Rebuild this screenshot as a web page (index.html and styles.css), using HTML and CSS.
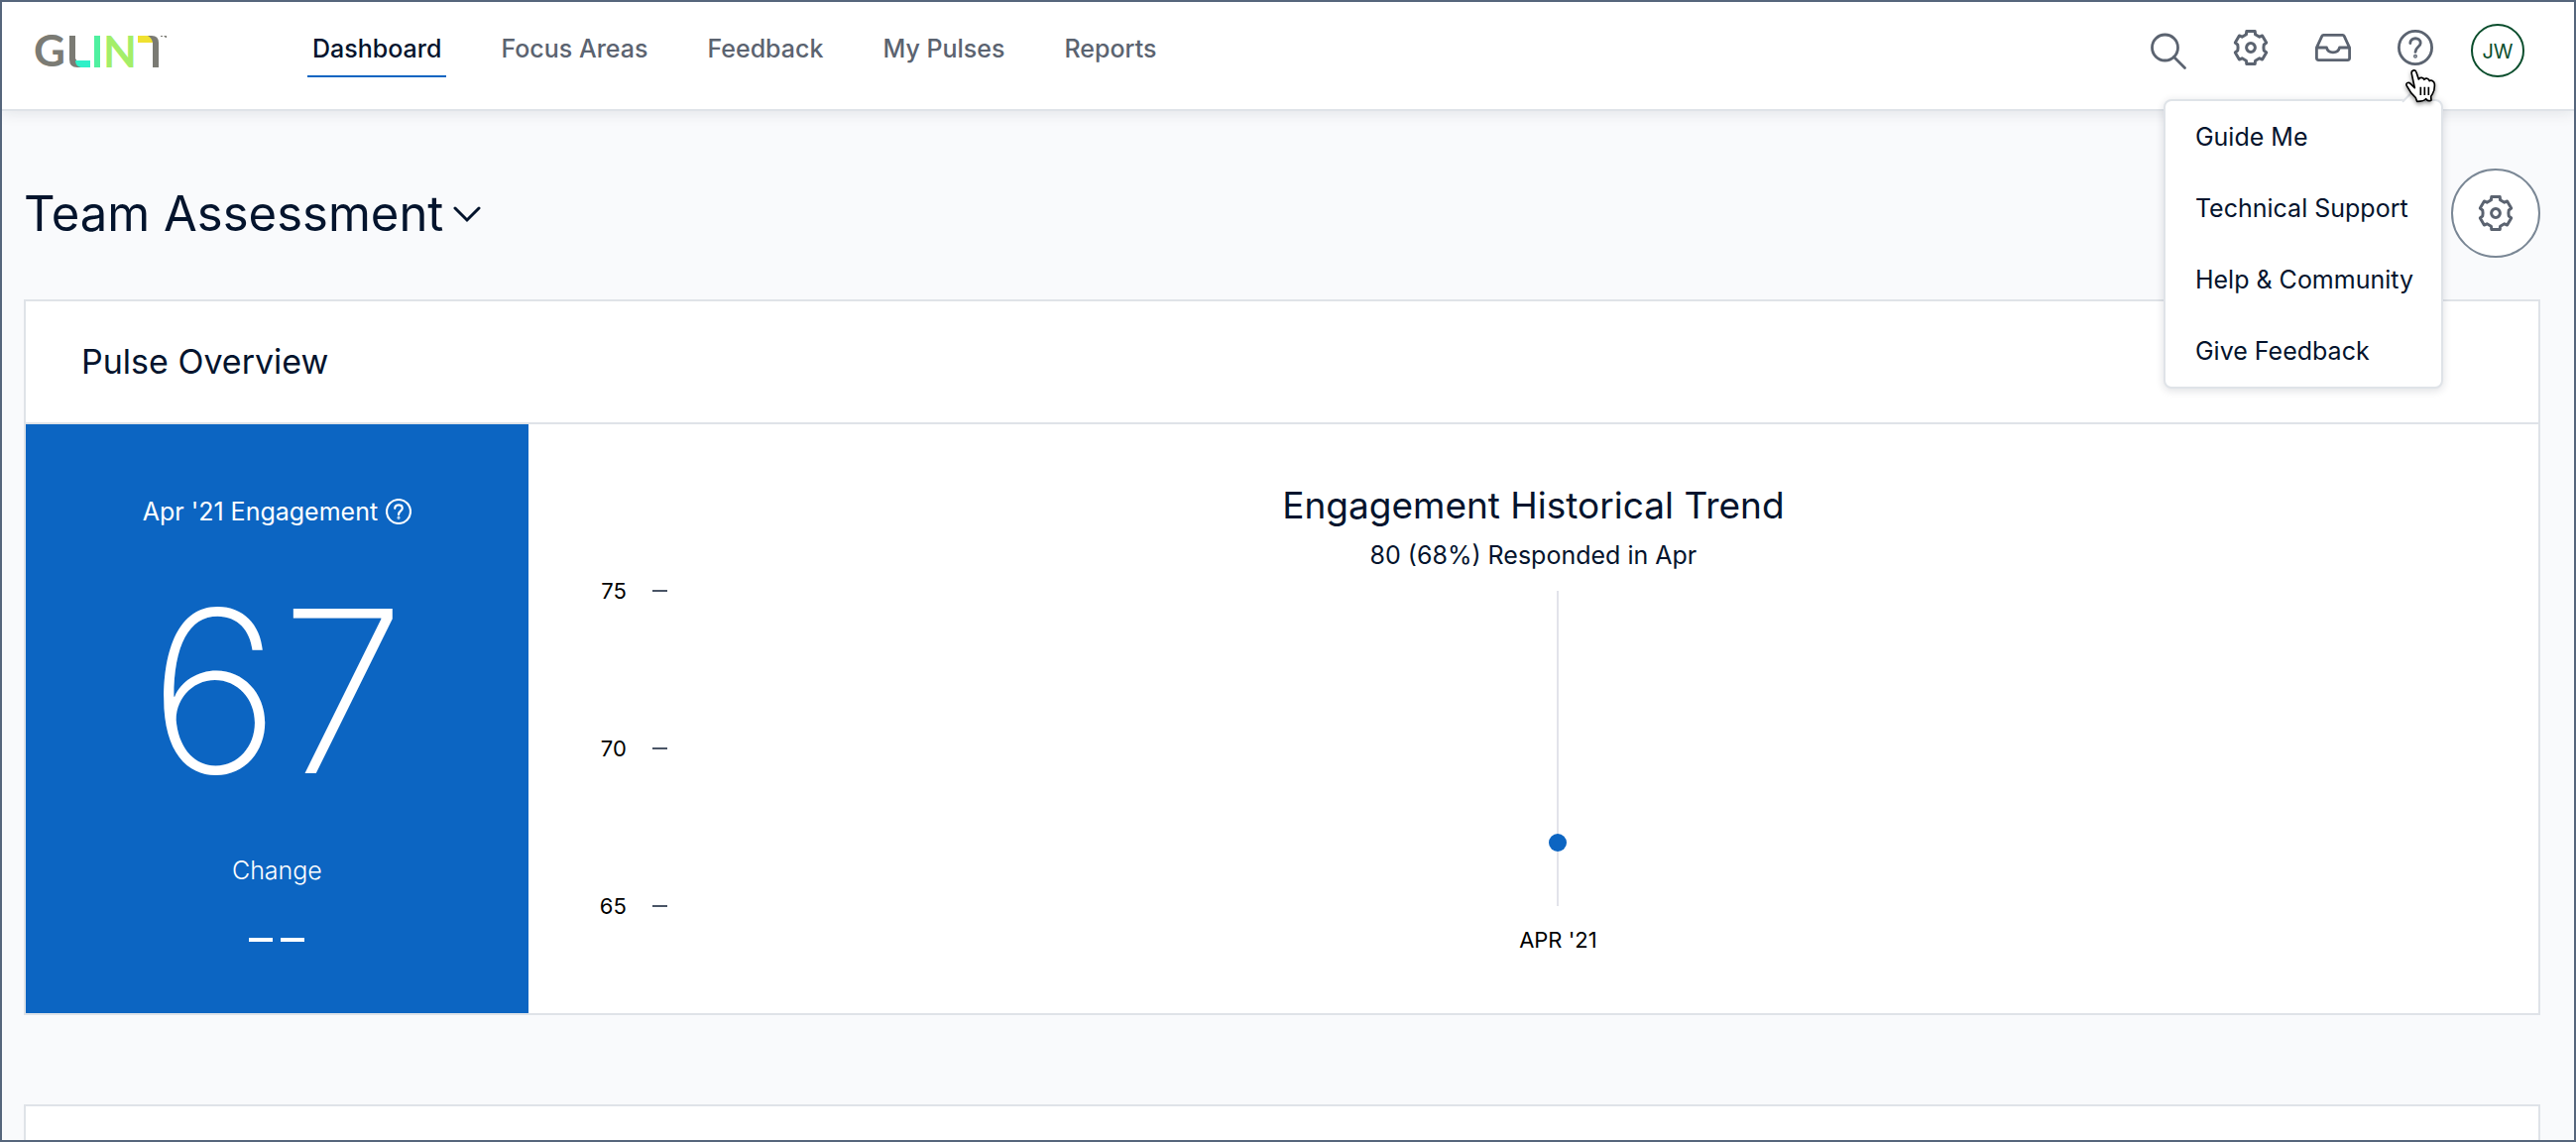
FILE: index.html
```html
<!DOCTYPE html>
<html lang="en">
<head>
<meta charset="utf-8">
<meta name="viewport" content="width=device-width, initial-scale=1">
<title>Team Assessment</title>
<link rel="stylesheet" href="styles.css">
</head>
<body>
<svg class="sprite" aria-hidden="true">
  <symbol id="gear" viewBox="-18 -18 36 36">
    <path d="M-4.6-13.2L-4.2-16.5H4.2L4.6-13.2L8.8-10.8L11.6-12L15.7-5L13.2-2.8Q12.6 0 13.2 2.8L15.7 5L11.6 12L8.8 10.8L4.6 13.2L4.2 16.5H-4.2L-4.6 13.2L-8.8 10.8L-11.6 12L-15.7 5L-13.2 2.8Q-12.6 0-13.2-2.8L-15.7-5L-11.6-12L-8.8-10.8Z"/>
    <circle r="4.4"/>
  </symbol>
  <symbol id="help" viewBox="0 0 36 36">
    <circle cx="18" cy="18" r="16.6"/>
    <path d="M12.8 13.6C13 7 23.2 7.300 23.200 13.400C23.200 17.200 18 17.400 18 22.400"/>
    <circle class="dot-fill" cx="18" cy="26.800" r=".6"/>
  </symbol>
</svg>

<header class="topbar">
  <a class="logo" href="#" aria-label="Glint">
    <svg width="136" height="54" viewBox="0 -10 136 54" aria-hidden="true">
      <text class="logo-letter logo-grey" x="0" y="33">G</text>
      <path fill="#7b7b74" d="M36 2h6v23l6 9h-4q-8 0-8-8z"/>
      <path fill="#2ff0c8" d="M42 27h15v7h-9q-6-1-6-7z"/>
      <path fill="#4ff0a0" d="M61 2h6v32h-6z"/>
      <text class="logo-letter logo-green" x="70" y="34">N</text>
      <path fill="#f0e130" d="M105 2h13l5 7h-18z"/>
      <path fill="#7b7b74" d="M115 2h4q7 0 7 7v25h-6V9q-1-5-5-7z"/>
      <path fill="#7b7b74" d="M128 2h2v1h-2zM131 2h3v2h-1z"/>
    </svg>
  </a>
  <nav class="mainnav" aria-label="Main">
    <a class="navlink active" href="#" aria-current="page">Dashboard</a>
    <a class="navlink" href="#">Focus Areas</a>
    <a class="navlink" href="#">Feedback</a>
    <a class="navlink" href="#">My Pulses</a>
    <a class="navlink" href="#">Reports</a>
  </nav>
  <div class="tools">
    <button class="tool" type="button" aria-label="Search">
      <svg class="icon" viewBox="0 0 36 36"><circle cx="14.500" cy="18" r="13"/><path d="M23.500 27.500L34.500 38.500"/></svg>
    </button>
    <button class="tool" type="button" aria-label="Settings"><svg class="icon icon-bold"><use href="#gear"/></svg></button>
    <button class="tool" type="button" aria-label="Inbox">
      <svg class="icon" viewBox="0 0 36 36"><path d="M1.400 18.200L6.800 6.400Q7.200 5.400 8.400 5.400H27.600Q28.800 5.400 29.200 6.400L34.600 18.200V28.600Q34.600 30.600 32.600 30.600H3.400Q1.400 30.600 1.400 28.600ZM1.400 18H11.500Q12.500 22.800 18 22.800Q23.500 22.800 24.500 18H34.600"/></svg>
    </button>
    <div class="help">
      <button class="tool" type="button" aria-label="Help" aria-expanded="true"><svg class="icon"><use href="#help"/></svg></button>
      <ul class="menu">
        <li><a class="menulink" href="#">Guide Me</a></li>
        <li><a class="menulink" href="#">Technical Support</a></li>
        <li><a class="menulink" href="#">Help &amp; Community</a></li>
        <li><a class="menulink" href="#">Give Feedback</a></li>
      </ul>
      <svg class="cursor" viewBox="0 0 96 105" aria-hidden="true">
        <path fill="#fff" d="M19 14C16 2 30-1 33 9L40 30C44 23 54 24 57 31C62 25 70 27 73 35C79 31 87 36 88 44C89 58 87 66 82 74L77 82L78 93C72 97 66 95 62 89C58 96 50 97 35 97L31 86C20 76 12 66 4 50C0 41 9 37 15 43L28 56Z"/>
        <path d="M46 53V78M58 53V78M70 53V78"/>
      </svg>
    </div>
    <button class="avatar" type="button">JW</button>
  </div>
</header>

<main class="page">
  <div class="titlebar">
    <h1 class="title"><button class="titlebutton" type="button">Team Assessment
      <svg class="chevron" viewBox="0 0 28 18" aria-hidden="true"><path d="M2 3L14 15L26 3"/></svg></button></h1>
    <button class="configure" type="button" aria-label="Configure dashboard"><svg class="icon icon-bold"><use href="#gear"/></svg></button>
  </div>

  <section class="card">
    <h2 class="cardtitle">Pulse Overview</h2>
    <div class="overview">
      <div class="score">
        <p class="scorelabel">Apr '21 Engagement
          <svg class="hint" aria-hidden="true"><use href="#help"/></svg></p>
        <p class="scorevalue">67</p>
        <p class="change">Change</p>
        <p class="nochange" aria-label="No change data"><span class="dash"></span><span class="dash"></span></p>
      </div>
      <figure class="trend">
        <figcaption class="trendhead">
          <h3 class="trendtitle">Engagement Historical Trend</h3>
          <p class="trendsub">80 (68%) Responded in Apr</p>
        </figcaption>
        <div class="chart">
          <ul class="axis">
            <li class="mark">75</li>
            <li class="mark">70</li>
            <li class="mark">65</li>
          </ul>
          <div class="plot">
            <div class="series"><span class="point" style="top: 80%"></span></div>
          </div>
          <p class="xlabel">APR '21</p>
        </div>
      </figure>
    </div>
  </section>

  <section class="card card-next"></section>
</main>
</body>
</html>
```
FILE: styles.css
```css
*, *::before, *::after { box-sizing: border-box; }

body {
  margin: 0;
  min-height: 100vh;
  display: flex;
  flex-direction: column;
  border: 2px solid #56667c;
  background: #f9fafc;
  color: #04142d;
  font-family: Inter, "Liberation Sans", sans-serif;
  font-size: 25px;
  line-height: 32px;
}

h1, h2, h3, p, ul, figure { margin: 0; padding: 0; font-weight: 400; }
ul { list-style: none; }
a { color: inherit; text-decoration: none; }
button { padding: 0; border: 0; background: none; font: inherit; color: inherit; cursor: pointer; }
svg { display: block; }
.sprite { display: none; }

/* Top bar */
.topbar {
  position: relative;
  z-index: 1;
  display: flex;
  align-items: flex-start;
  padding: 22px 50px 32px 32px;
  border-bottom: 2px solid #dfe3e8;
  background: #fff;
  box-shadow: 0 2px 14px rgba(20, 30, 50, .1);
}
.logo { margin-right: 140px; }
.logo-letter { font: 700 44px Lato, sans-serif; }
.logo-grey { fill: #7b7b74; }
.logo-green { fill: #a4ee68; }

.mainnav { display: flex; gap: 50px; }
.navlink {
  padding: 0 5px 2px;
  border-bottom: 2px solid transparent;
  color: #5b6370;
  font-weight: 500;
  line-height: 50px;
}
.navlink.active { border-color: #0c65c2; color: #04142d; }

.tools { display: flex; gap: 47px; margin-left: auto; }
.tool { display: flex; align-items: center; height: 48px; color: #5b6370; }
.icon {
  width: 36px;
  height: 36px;
  overflow: visible;
  fill: none;
  stroke: currentColor;
  stroke-width: 2.8;
  stroke-linecap: round;
  stroke-linejoin: round;
}
.icon-bold { stroke-width: 3; }
.dot-fill { fill: currentColor; }
.help { position: relative; margin-right: -9px; }
.avatar {
  width: 54px;
  height: 54px;
  padding-top: 2px;
  border: 2px solid #0a4d2c;
  border-radius: 50%;
  color: #0a4d2c;
  font-size: 20px;
}

/* Help menu */
.menu {
  position: absolute;
  top: 76px;
  right: -10px;
  padding: 0 28px 0 30px;
  border: 2px solid #dfe3e8;
  border-radius: 8px;
  background: #fff;
  box-shadow: 0 2px 8px rgba(20, 30, 50, .14);
  white-space: nowrap;
}
.menu::before {
  content: "";
  position: absolute;
  top: -9px;
  right: 18px;
  width: 18px;
  height: 18px;
  border: solid #dfe3e8;
  border-width: 2px 0 0 2px;
  background: #fff;
  transform: rotate(45deg);
}
.menulink { position: relative; display: block; line-height: 72px; }
.cursor {
  position: absolute;
  top: 46px;
  left: 8px;
  width: 32px;
  height: 35px;
  overflow: visible;
  fill: none;
  stroke: #000;
  stroke-width: 5;
  stroke-linejoin: round;
  filter: drop-shadow(0 2px 2px rgba(0, 0, 0, .4));
}

/* Page */
.page {
  flex: 1;
  display: flex;
  flex-direction: column;
  padding: 58px 34px 0 22px;
}
.titlebar {
  display: flex;
  align-items: center;
  justify-content: space-between;
  margin-bottom: 42px;
}
.title { padding-top: 2px; font-size: 49px; line-height: 64px; }
.titlebutton { display: flex; align-items: center; gap: 10px; }
.chevron { width: 28px; height: 18px; fill: none; stroke: currentColor; stroke-width: 3; stroke-linecap: round; }
.configure {
  display: grid;
  place-items: center;
  width: 90px;
  height: 90px;
  border: 2px solid #7a8795;
  border-radius: 50%;
  background: #fff;
  color: #5b6370;
}

.card { border: 2px solid #dfe3e8; background: #fff; }
.card-next { flex: 1; min-height: 36px; margin-top: 90px; border-bottom: 0; }
.cardtitle {
  padding: 37px 56px;
  border-bottom: 2px solid #dfe3e8;
  font-size: 34px;
  line-height: 48px;
}
.overview { display: flex; }

/* Score panel */
.score {
  flex: 0 0 20%;
  display: flex;
  flex-direction: column;
  align-items: center;
  gap: 52px;
  padding: 72px 16px;
  background: #0c65c2;
  color: #fff;
}
.scorelabel { display: flex; align-items: center; gap: 8px; }
.hint { width: 26px; height: 26px; fill: none; stroke: currentColor; stroke-width: 3; stroke-linecap: round; }
.scorevalue { font-size: 228px; font-weight: 200; line-height: 226px; }
.change { font-weight: 300; }
.nochange { display: flex; gap: 8px; }
.dash { width: 24px; height: 4px; background: #fff; }

/* Trend chart */
.trend { flex: 1; padding: 58px 90px 56px 72px; }
.trendhead { margin: 0 -90px 0 -72px; text-align: center; }
.trendtitle { margin-bottom: 10px; font-size: 37px; line-height: 48px; }
.chart {
  display: grid;
  grid-template-columns: auto 1fr;
  row-gap: 6px;
  margin-top: 6px;
  color: #000;
  font-size: 22px;
  line-height: 28px;
}
.axis { display: flex; flex-direction: column; justify-content: space-between; height: 346px; }
.mark { display: flex; align-items: center; justify-content: flex-end; gap: 26px; }
.mark::after { content: ""; width: 15px; height: 2px; background: #4a5566; }
.plot { display: flex; justify-content: center; padding: 14px 0; }
.series { position: relative; width: 2px; background: #e2e3ea; }
.point {
  position: absolute;
  left: -8px;
  width: 18px;
  height: 18px;
  margin-top: -9px;
  border-radius: 50%;
  background: #0c65c2;
}
.xlabel { grid-column: 2; text-align: center; }
```
